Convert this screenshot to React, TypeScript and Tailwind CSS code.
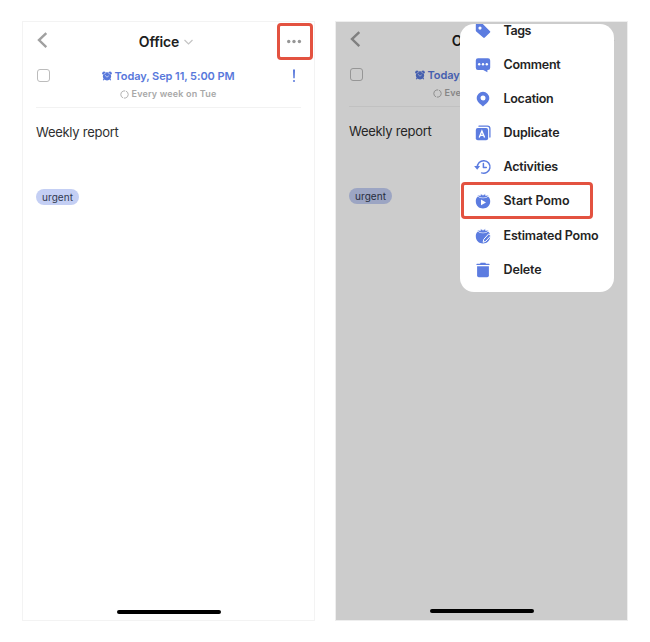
import React from 'react';

function TomatoLeaves() {
  return <path d="M2.4 1.9 5.4 2.6 5.8 .7 8 2.2 10.2 .7 10.6 2.6 13.6 1.9 12 4.3Q8 5.5 4 4.3Z" fill="#5c7ce0" stroke="#fff" strokeWidth=".6" />;
}

function MenuIcon({ name }: { name: string }) {
  return (
    <svg viewBox="0 0 16 16" className="h-4 w-4 shrink-0 overflow-visible" fill="#5c7ce0">
      {name === 'Tags' && (
        <path fillRule="evenodd" d="M.8 1.7Q.8.8 1.7.8H7.6L15 8.2Q15.6 8.8 15 9.4L9.8 14.6Q9 15.3 8.2 14.6L1.2 8.5Q.8 8 .8 7.5ZM5 3.5a1.6 1.6 0 1 0 0 3.2 1.6 1.6 0 0 0 0-3.2Z" />
      )}
      {name === 'Comment' && (
        <>
          <path d="M3 1.3H13Q15.2 1.3 15.2 3.5V10.8Q15.2 13 13 13H12.4V15.2L8.2 13H3Q.8 13 .8 10.8V3.5Q.8 1.3 3 1.3Z" />
          <g fill="#fff"><circle cx="4.2" cy="7.2" r="1.2" /><circle cx="8" cy="7.2" r="1.2" /><circle cx="11.8" cy="7.2" r="1.2" /></g>
        </>
      )}
      {name === 'Location' && (
        <path fillRule="evenodd" d="M8 .8A6.3 6.3 0 0 0 1.7 7.1C1.7 11 5.3 13 8 15.5 10.7 13 14.3 11 14.3 7.1A6.3 6.3 0 0 0 8 .8ZM8 4.5a2.5 2.5 0 1 1 0 5 2.5 2.5 0 0 1 0-5Z" />
      )}
      {name === 'Duplicate' && (
        <>
          <path d="M4 1.2H12.4Q14.9 1.2 14.9 3.7V12" fill="none" stroke="#5c7ce0" strokeWidth="1.3" strokeLinecap="round" />
          <rect x=".8" y="2.9" width="12.3" height="12.3" rx="2" />
          <path d="M4.2 12.4 6.9 6 9.6 12.4M5.2 10.4H8.6" fill="none" stroke="#fff" strokeWidth="1.4" />
        </>
      )}
      {name === 'Activities' && (
        <>
          <path d="M2.4 8.5A6.3 6.3 0 1 1 6.6 13.9M8.4 4.6V8.4H11.3" fill="none" stroke="#5c7ce0" strokeWidth="1.5" strokeLinecap="round" strokeLinejoin="round" />
          <path d="M-.9 7H5.1L2.2 10.7Z" />
        </>
      )}
      {name === 'Start Pomo' && (
        <>
          <path d="M8 3C12.7 2.1 15.2 4.5 15.2 8.2C15.2 12.8 12 15.4 8 15.4S.8 12.8.8 8.2C.8 4.5 3.3 2.1 8 3Z" />
          <TomatoLeaves />
          <path d="M6 6.5V12.3L11 9.4Z" fill="#fff" />
        </>
      )}
      {name === 'Estimated Pomo' && (
        <>
          <path d="M8 3C12.7 2.1 15.2 4.5 15.2 8.2C15.2 12.8 12 15.4 8 15.4S.8 12.8.8 8.2C.8 4.5 3.3 2.1 8 3Z" />
          <TomatoLeaves />
          <path d="M8.1 14.3 8.8 11.3 13.7 5.9 15.8 7.8 10.9 13.2Z" stroke="#fff" strokeWidth="1" />
        </>
      )}
      {name === 'Delete' && (
        <>
          <path d="M2.1 4.2H13.9V13.5Q13.9 15.2 12.2 15.2H3.8Q2.1 15.2 2.1 13.5Z" />
          <path d="M2 2.4H14M5.8 1.4H10.2" fill="none" stroke="#5c7ce0" strokeWidth="1.2" strokeLinecap="round" />
        </>
      )}
    </svg>
  );
}

const items = ['Tags', 'Comment', 'Location', 'Duplicate', 'Activities', 'Start Pomo', 'Estimated Pomo', 'Delete'];
const labelWidths = [27.5, 57, 50, 56, 54.5, 66, 95, 38];

function Label({ text, width, className }: { text: string; width: number; className: string }) {
  const ref = React.useRef<HTMLSpanElement>(null);
  const [spacing, setSpacing] = React.useState(0);
  React.useLayoutEffect(() => {
    if (ref.current) setSpacing((width - ref.current.getBoundingClientRect().width) / text.length);
  }, [text, width]);
  return <span ref={ref} className={`inline-block whitespace-nowrap ${className}`} style={{ letterSpacing: spacing }}>{text}</span>;
}

function Task() {
  return (
    <div className="flex h-full flex-col px-[13px]">
      <header className="grid h-[39px] grid-cols-[24px_1fr_24px] items-center">
        <svg className="-mt-[3px] h-4 w-3" viewBox="0 0 12 16" fill="none" stroke="#a0a0a0" strokeWidth="2.4"><path d="M10.3 1.1 3 8.1 10.3 15.1" /></svg>
        <div className="flex items-center justify-center gap-[5px] pr-[5px]">
          <Label text="Office" width={40.5} className="text-[14px] font-semibold text-[#202020]" />
          <svg className="h-[6px] w-[9px]" viewBox="0 0 9 6" fill="none" stroke="#c4c4c4" strokeWidth="1.2"><path d="M.5 1 4.5 5 8.5 1" /></svg>
        </div>
        <svg className="ml-[1px] h-4 w-[30px]" viewBox="0 0 30 16" fill="#969696"><circle cx="10.7" cy="7.5" r="1.7" /><circle cx="16" cy="7.5" r="1.7" /><circle cx="21.4" cy="7.5" r="1.7" /></svg>
      </header>
      <div className="flex h-[47px] items-start border-b border-[#f2f2f2] pt-[7px]">
        <div className="ml-[1px] mt-[1px] h-[13px] w-[13px] rounded-[3px] border-[1.5px] border-[#bcbcbc]" />
        <div className="ml-[51px] flex w-[134px] flex-col items-center">
          <div className="flex h-4 items-center gap-[3px] text-[#5878db]">
            <svg className="h-[10px] w-[10px] shrink-0" viewBox="0 0 10 10" fill="currentColor">
              <circle cx="5" cy="5.3" r="4.1" /><circle cx="2" cy="2.2" r="1.8" /><circle cx="8" cy="2.2" r="1.8" /><path d="M2 8 1.3 9.3M8 8 8.7 9.3" stroke="currentColor" strokeWidth="1.1" /><path d="M1.7 3.7Q2.5 2.2 4 1.6M6 1.6Q7.5 2.2 8.3 3.7M3.2 4.2 4.8 6.2 6.8 4.8" fill="none" stroke="#fff" strokeWidth=".6" />
            </svg>
            <Label text="Today, Sep 11, 5:00 PM" width={120} className="text-[11px] leading-4 font-semibold" />
          </div>
          <div className="mt-[2px] flex h-4 items-center gap-[3px] text-[#a8a8a8]">
            <svg className="h-[9px] w-[9px]" viewBox="0 0 9 9" fill="none" stroke="currentColor" strokeWidth=".9"><path d="M3.2 7.9A3.6 3.6 0 0 1 3.2 1.1L5 .9M5.8 1.1A3.6 3.6 0 0 1 5.8 7.9L4 8.1" /></svg>
            <Label text="Every week on Tue" width={85} className="text-[9px] leading-4 font-semibold" />
          </div>
        </div>
        <svg className="ml-auto mr-[5px] mt-[1px] h-[14px] w-[4px]" viewBox="0 0 4 14" fill="#5878db"><path d="M1 .5H3L2.7 9.3H1.3Z" /><circle cx="2" cy="12" r="1" /></svg>
      </div>
      <div className="mt-[13px] h-5 leading-5"><Label text="Weekly report" width={82.5} className="text-[13px] text-[#303030]" /></div>
      <div className="mt-[48px] flex h-4 w-[43px] items-center justify-center rounded-full bg-[#c4cff4]">
        <Label text="urgent" width={31} className="text-[10px] leading-4 text-[#30384f]" />
      </div>
      <div className="mt-auto mb-[6px] h-[4px] w-[104px] self-center rounded-full bg-black" />
    </div>
  );
}

export default function App() {
  return (
    <main className="flex h-[642px] w-[650px] gap-5 bg-white pt-[21px] pl-[22px] font-['Inter','Liberation_Sans',sans-serif]">
      <section className="relative h-[600px] w-[293px] border border-[#f3f3f3] bg-white">
        <Task />
        <div className="absolute top-[1px] left-[254px] h-[37px] w-[36px] rounded-[4px] border-[3px] border-[#e35240]" />
      </section>
      <section className="relative h-[600px] w-[293px] border border-[#eeeeee] bg-white">
        <div className="relative -top-px h-full"><Task /></div>
        <div className="absolute inset-0 bg-black/20" />
        <div className="absolute top-[1.5px] left-[124px] h-[268.5px] w-[154px] overflow-hidden rounded-[14px] bg-white pt-[24.3px]">
          <div className="-mt-[34.15px]">
            {items.map((item, index) => (
              <div key={item} className="flex h-[34.15px] items-center gap-[12.5px] pl-[15px]">
                <MenuIcon name={item} />
                <Label text={item} width={labelWidths[index]} className="text-[12.5px] leading-5 font-[570] text-[#242424]" />
              </div>
            ))}
          </div>
        </div>
        <div className="absolute top-[160px] left-[125px] h-[37px] w-[132px] rounded-[4px] border-[3px] border-[#e35240]" />
      </section>
    </main>
  );
}
